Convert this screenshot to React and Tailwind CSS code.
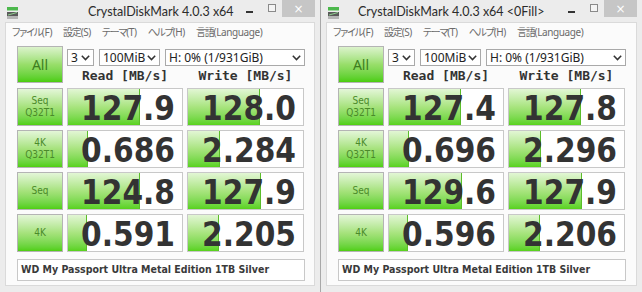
import React from "react";

const Chevron = () => (
  <svg width="9" height="6" viewBox="0 0 9 6">
    <path d="M0.8 0.8 L4.5 4.6 L8.2 0.8" fill="none" stroke="#333" strokeWidth="1.5" />
  </svg>
);

const AppIcon = () => (
  <svg width="11" height="12" viewBox="0 0 11 12">
    <rect x="0" y="0" width="11" height="3" fill="#4cb84c" />
    <rect x="0" y="3" width="11" height="1" fill="#9ed69e" />
    <rect x="0" y="5" width="11" height="4" fill="#5a5a5a" />
    <path d="M1 8 L10 5.5" stroke="#8fd18f" strokeWidth="1" />
    <rect x="0" y="9" width="11" height="3" fill="#b5b5b5" />
  </svg>
);

function Select({ width, text }) {
  return (
    <div
      className={`${width} h-[17px] bg-white border border-[#a9a9a9] flex items-center justify-between pl-[3px] pr-[3px] text-[12px] leading-none text-[#222] font-['Noto_Sans',sans-serif]`}
    >
      <span>{text}</span>
      <Chevron />
    </div>
  );
}

function LabelButton({ lines }) {
  return (
    <div className="w-[46px] h-[38px] border border-[#b4b4b4] bg-linear-to-b from-[#e4f6d8] via-[#a6e27c] to-[#4fcf0d] flex flex-col items-center justify-center leading-[12px] text-[10px] text-[#4a8a2a] font-['DejaVu_Sans_Condensed','DejaVu_Sans',sans-serif] font-stretch-condensed">
      {lines.map((l, i) => (
        <span key={i}>{l}</span>
      ))}
    </div>
  );
}

function ValueCell({ width, value, bar }) {
  return (
    <div className={`${width} h-[38px] border border-[#c8c8c8] bg-white relative flex items-center justify-end pr-[7px]`}>
      <div
        className="absolute left-0 top-0 bottom-0 bg-linear-to-b from-[#e2f6d4] via-[#a8e47e] to-[#58d21a] border-r border-[#5bbd2a]"
        style={{ width: bar + "px" }}
      />
      <span className="relative text-[33px] leading-none pt-[3px] font-bold text-[#333333] font-['DejaVu_Sans_Condensed','DejaVu_Sans',sans-serif] font-stretch-condensed">
        {value}
      </span>
    </div>
  );
}

const menu = [
  ["ファイル", "(F)"],
  ["設定", "(S)"],
  ["テーマ", "(T)"],
  ["ヘルプ", "(H)"],
  ["言語", "(Language)"],
];

function Window({ title, titleMargin, rows, widthClass }) {
  return (
    <div className={`${widthClass} h-[292px] bg-[#ececec] flex flex-col`}>
      <div className="h-[22px] flex items-start shrink-0">
        <div className="ml-[7px] mt-[7px]">
          <AppIcon />
        </div>
        <div className={`${titleMargin} mt-[4px] text-[12.5px] leading-[16px] text-[#2b2b2b] font-['Lato',sans-serif] whitespace-nowrap`}>
          {title}
        </div>
        <div className="flex-1" />
        <div className="w-[7px] h-[2px] bg-[#333] mt-[11px]" />
        <div className="ml-[15px] mt-[4px] w-[8px] h-[8px] border border-[#8a8a8a] bg-[#f4f4f4]" />
        <div className="ml-[6px] w-[33px] h-[17px] bg-[#c6c6c6] flex items-center justify-center text-white text-[12px] leading-none font-['DejaVu_Sans',sans-serif]">
          ×
        </div>
        <div className="w-[5px]" />
      </div>
      <div className="mx-[5px] flex-1 bg-[#fbfbfb] border border-[#dadada] flex flex-col">
        <div className="h-[17px] flex items-center pl-[6px] gap-[11px] text-[10px] leading-none text-[#6a6a6a] font-['Noto_Sans','Noto_Sans_CJK_JP',sans-serif] whitespace-nowrap">
          {menu.map(([jp, lat], i) => (
            <span key={i} className="flex items-center">
              <span className="font-['Noto_Sans_CJK_JP',sans-serif] [font-feature-settings:'palt'] tracking-[-1.2px]">{jp}</span>
              <span className="tracking-[-0.4px]">{lat}</span>
            </span>
          ))}
        </div>
        <div className="pl-[11px] pt-[6px] flex flex-col">
          <div className="flex gap-[4px]">
            <div className="w-[46px] h-[37px] border border-[#b4b4b4] bg-linear-to-b from-[#dcf3cc] via-[#98de6a] to-[#4acd05] flex items-center justify-center text-[14px] text-[#3d7d1f] font-['Noto_Sans',sans-serif]">
              All
            </div>
            <div className="flex flex-col">
              <div className="flex gap-[5px] mt-[3px]">
                <Select width="w-[27px]" text="3" />
                <Select width="w-[61px]" text="100MiB" />
                <Select width="w-[140px]" text="H: 0% (1/931GiB)" />
              </div>
              <div className="flex gap-[4px] mt-[2px] text-[13px] leading-[16px] font-bold text-[#333] font-['DejaVu_Sans_Mono',monospace]">
                <div className="w-[116px] text-center">Read [MB/s]</div>
                <div className="w-[117px] text-center">Write [MB/s]</div>
              </div>
            </div>
          </div>
          {rows.map((r, i) => (
            <div key={i} className="flex gap-[4px] mt-[4px]">
              <LabelButton lines={r.label} />
              <ValueCell width="w-[116px]" value={r.r} bar={r.rb} />
              <ValueCell width="w-[117px]" value={r.w} bar={r.wb} />
            </div>
          ))}
          <div className="mt-[7px] w-[288px] h-[22px] bg-white border border-[#c8c8c8] flex items-center pl-[3px] text-[10.5px] font-bold text-[#3a3a3a] font-['DejaVu_Sans_Condensed','DejaVu_Sans',sans-serif] font-stretch-condensed whitespace-nowrap">
            WD My Passport Ultra Metal Edition 1TB Silver
          </div>
        </div>
      </div>
      <div className="h-[6px] shrink-0" />
    </div>
  );
}

const leftRows = [
  { label: ["Seq", "Q32T1"], r: "127.9", rb: 72, w: "128.0", wb: 72 },
  { label: ["4K", "Q32T1"], r: "0.686", rb: 20, w: "2.284", wb: 32 },
  { label: ["Seq"], r: "124.8", rb: 72, w: "127.9", wb: 73 },
  { label: ["4K"], r: "0.591", rb: 19, w: "2.205", wb: 31 },
];

const rightRows = [
  { label: ["Seq", "Q32T1"], r: "127.4", rb: 72, w: "127.8", wb: 72 },
  { label: ["4K", "Q32T1"], r: "0.696", rb: 20, w: "2.296", wb: 32 },
  { label: ["Seq"], r: "129.6", rb: 73, w: "127.9", wb: 73 },
  { label: ["4K"], r: "0.596", rb: 19, w: "2.206", wb: 31 },
];

export default function App() {
  return (
    <div className="w-[642px] h-[292px] flex overflow-hidden bg-[#ececec]">
      <Window
        title="CrystalDiskMark 4.0.3 x64"
        titleMargin="ml-[70px]"
        rows={leftRows}
        widthClass="w-[320px]"
      />
      <Window
        title="CrystalDiskMark 4.0.3 x64 <0Fill>"
        titleMargin="ml-[19px]"
        rows={rightRows}
        widthClass="w-[322px] border-l border-[#a8a8a8]"
      />
    </div>
  );
}
